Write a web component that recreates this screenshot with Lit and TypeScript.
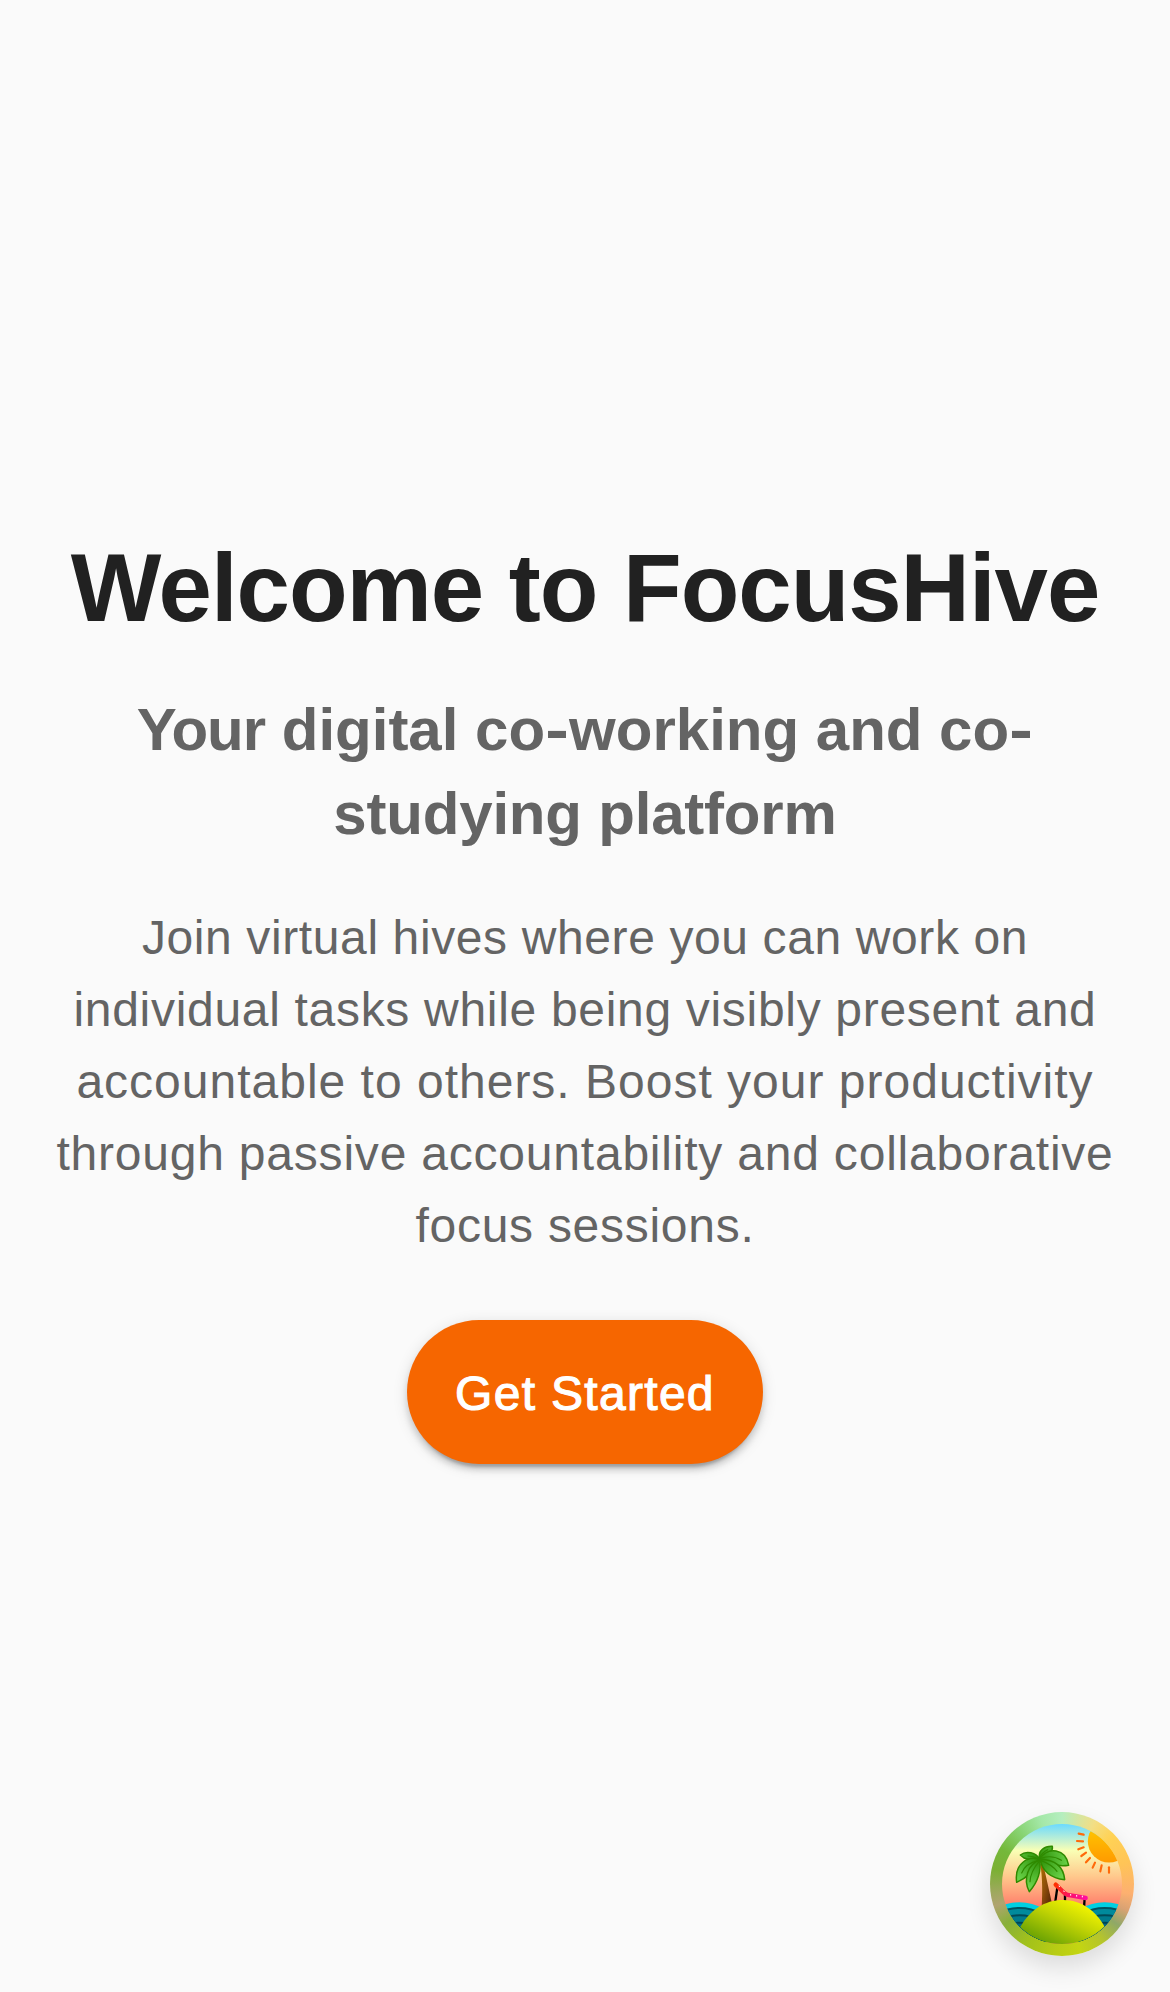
import { LitElement, html, css, svg } from "lit";
import { customElement } from "lit/decorators.js";

@customElement("island-badge")
class IslandBadge extends LitElement {
  static styles = css`
    :host {
      display: block;
    }
    .ring {
      box-sizing: border-box;
      display: block;
      width: 144px;
      height: 144px;
      padding: 12px;
      border: 0;
      border-radius: 50%;
      cursor: pointer;
      background: conic-gradient(
        #b5eebf 0deg,
        #f3de84 28deg,
        #ffd255 46deg,
        #ffc457 72deg,
        #fdb070 98deg,
        #d9a273 112deg,
        #8fa868 126deg,
        #b5c42c 144deg,
        #c3d512 165deg,
        #b8cc14 185deg,
        #a3c21a 210deg,
        #88b03a 235deg,
        #b0a470 252deg,
        #a0a860 262deg,
        #7bb034 282deg,
        #74b83a 300deg,
        #88d474 322deg,
        #a4e8a8 342deg,
        #b5eebf 360deg
      );
      box-shadow: 0 12px 24px rgba(0, 0, 0, 0.12);
    }
    .art {
      display: block;
      width: 120px;
      height: 120px;
    }
  `;

  private rays = [
    [326, 130, 341, 133],
    [321, 152, 339, 153],
    [325, 177, 341, 171],
    [334, 197, 348, 187],
    [348, 216, 360, 203],
    [368, 232, 375, 217],
    [391, 243, 395, 225],
    [417, 247, 417, 231],
  ];

  private wave(cx: number, flip: number) {
    return svg`
      <g transform="translate(${cx} 0) scale(${flip} 1)">
        <ellipse cx="0" cy="399" rx="100" ry="63" fill="#00cfe2"/>
        <ellipse cx="0" cy="409" rx="94" ry="59" fill="#005362"/>
        <ellipse cx="0" cy="414" rx="92" ry="58" fill="#008a9c"/>
        <ellipse cx="0" cy="430" rx="88" ry="58" fill="#004a58"/>
        <ellipse cx="0" cy="436" rx="86" ry="58" fill="#007a8c"/>
        <ellipse cx="0" cy="452" rx="82" ry="58" fill="#004654"/>
        <ellipse cx="0" cy="458" rx="80" ry="58" fill="#006a80"/>
        <ellipse cx="0" cy="474" rx="76" ry="58" fill="#00465a"/>
        <ellipse cx="0" cy="480" rx="74" ry="58" fill="#005d78"/>
      </g>`;
  }

  render() {
    return html`
      <button class="ring" aria-label="Open devtools">
        <svg class="art" viewBox="96 101 360 360" aria-hidden="true">
          <defs>
            <clipPath id="disc"><circle cx="276" cy="281" r="180" /></clipPath>
            <linearGradient id="sky" x1="0" y1="0" x2="0" y2="1">
              <stop offset="0" stop-color="#6bdaff" />
              <stop offset="0.22" stop-color="#f9ffb5" />
              <stop offset="0.44" stop-color="#ffc88c" />
              <stop offset="0.68" stop-color="#ff7f6b" />
            </linearGradient>
            <linearGradient id="sun" x1="0" y1="0" x2="0" y2="1">
              <stop offset="0" stop-color="#ffcf00" />
              <stop offset="1" stop-color="#ff9a00" />
            </linearGradient>
            <linearGradient id="hill" x1="0.85" y1="0.15" x2="0.15" y2="0.95">
              <stop offset="0" stop-color="#f6f700" />
              <stop offset="0.4" stop-color="#c2d404" />
              <stop offset="1" stop-color="#5f9c04" />
            </linearGradient>
            <linearGradient id="trunk" x1="0" y1="0" x2="1" y2="1">
              <stop offset="0" stop-color="#b07000" />
              <stop offset="0.5" stop-color="#8a4a0a" />
              <stop offset="1" stop-color="#4a1d08" />
            </linearGradient>
            <radialGradient id="leaf" gradientUnits="userSpaceOnUse" cx="209" cy="206" r="95">
              <stop offset="0" stop-color="#2f8a00" />
              <stop offset="0.3" stop-color="#3fa41c" />
              <stop offset="1" stop-color="#70d94f" />
            </radialGradient>
            <linearGradient id="seat" gradientUnits="userSpaceOnUse" x1="255" y1="285" x2="348" y2="322">
              <stop offset="0" stop-color="#ff3000" />
              <stop offset="0.55" stop-color="#fb0f6e" />
              <stop offset="1" stop-color="#ff0fa0" />
            </linearGradient>
          </defs>
          <g clip-path="url(#disc)">
            <rect x="96" y="101" width="360" height="360" fill="url(#sky)" />
            <circle cx="417" cy="153" r="63.5" fill="url(#sun)" />
            <g stroke="#ff6a0a" stroke-width="6.5" stroke-linecap="round">
              ${this.rays.map(
                ([x1, y1, x2, y2]) =>
                  svg`<line x1=${x1} y1=${y1} x2=${x2} y2=${y2}></line>`
              )}
            </g>
            ${this.wave(148, 1)} ${this.wave(404, -1)}
            <path
              d="M211 222 C217 262 218 302 215 350 L248 350 C239 306 229 262 219 220 Z"
              fill="url(#trunk)"
            />
            <g
              fill="url(#leaf)"
              stroke="#2f8a00"
              stroke-width="4.5"
              stroke-linejoin="round"
            >
              <path d="M209 207 C199 186 168 180 151 194 L162 203 C178 210 194 209 209 207 Z" />
              <path d="M209 204 C203 180 224 167 247 168 C250 184 232 196 209 204 Z" />
              <path d="M209 205 C234 168 287 174 296 225 C268 230 238 222 209 205 Z" />
              <path d="M208 207 C176 196 132 218 140 276 C172 262 194 240 208 207 Z" />
              <path d="M209 208 C176 222 157 264 178 304 C200 279 215 247 209 208 Z" />
              <path d="M210 207 C250 208 280 226 284 268 C244 264 218 244 210 207 Z" />
            </g>
            <g fill="none" stroke="#2f8a00" stroke-width="3.5" stroke-linecap="round">
              <path d="M205 211 C177 217 162 230 155 248" />
              <path d="M207 214 C190 234 181 252 180 274" />
              <path d="M214 211 C235 219 250 229 261 243" />
              <path d="M216 203 C238 196 258 200 274 210" />
              <path d="M209 202 C214 190 222 183 233 178" />
              <path d="M203 205 C194 199 184 197 174 197" />
            </g>
            <g stroke="#000" stroke-width="7" fill="none">
              <path d="M262 292 L255 340" />
              <path d="M285 314 V340" />
              <path d="M344 324 L342 352" />
            </g>
            <path
              d="M257 283 L283 308 Q290 315 302 315 L347 323"
              fill="none"
              stroke="url(#seat)"
              stroke-width="13"
              stroke-linecap="round"
              stroke-linejoin="round"
            />
            <path
              d="M267 286 L269 290 M281 301 L283 305 M302 311 V316 M320 314 V319 M337 316 V321"
              stroke="#fff"
              stroke-width="3"
            />
            <path
              d="M152 408 C180 360 222 329 280 329 C334 329 378 362 403 408 L403 461 H152 Z"
              fill="url(#hill)"
            />
          </g>
        </svg>
      </button>
    `;
  }
}

@customElement("app-root")
class AppRoot extends LitElement {
  static styles = css`
    :host {
      display: block;
      font-family: "Liberation Sans", Arial, Helvetica, sans-serif;
    }
    .page {
      position: relative;
      box-sizing: border-box;
      height: 1992px;
      padding: 2px 48px 0;
      background: #fafafa;
      display: flex;
      flex-direction: column;
      align-items: center;
      justify-content: center;
      text-align: center;
    }
    .title {
      margin: 0 0 42px;
      font-size: 96px;
      line-height: 116px;
      font-weight: 700;
      letter-spacing: -1.03px;
      color: #212121;
      white-space: nowrap;
    }
    .tagline {
      margin: 0 0 46px;
      font-size: 60px;
      line-height: 84px;
      font-weight: 700;
      color: #646464;
    }
    .tight {
      letter-spacing: -1px;
    }
    .hyphen {
      display: inline-block;
      padding: 0 2px;
      transform: scaleX(1.18);
    }
    .snug {
      letter-spacing: -0.2px;
    }
    .copy {
      margin: 0 0 58px;
      font-size: 48px;
      line-height: 72px;
      color: #646464;
      white-space: nowrap;
    }
    .l1 {
      letter-spacing: 0.61px;
    }
    .l2 {
      letter-spacing: 0.69px;
    }
    .l3 {
      letter-spacing: 1px;
    }
    .l4 {
      letter-spacing: 0.79px;
    }
    .l5 {
      letter-spacing: 0.72px;
    }
    .cta {
      box-sizing: border-box;
      width: 356px;
      height: 144px;
      padding: 2px 0 0;
      border: 0;
      border-radius: 72px;
      background: #f66600;
      color: #fff;
      font: inherit;
      font-size: 48px;
      letter-spacing: 1.3px;
      -webkit-text-stroke: 1.1px #fff;
      box-shadow: 0 9px 3px -6px rgba(0, 0, 0, 0.2),
        0 6px 6px 0 rgba(0, 0, 0, 0.14), 0 3px 15px 0 rgba(0, 0, 0, 0.12);
      cursor: pointer;
    }
    .floating {
      position: absolute;
      right: 36px;
      bottom: 36px;
    }
  `;

  render() {
    return html`
      <main class="page">
        <h1 class="title">Welcome to FocusHive</h1>
        <h2 class="tagline">
          <span class="tight">Your</span> digital
          co<span class="hyphen">-</span>working and
          co<span class="hyphen">-</span><br /><span class="snug"
            >studying platform</span
          >
        </h2>
        <p class="copy">
          <span class="l1">Join virtual hives where you can work on</span><br />
          <span class="l2">individual tasks while being visibly present and</span
          ><br />
          <span class="l3">accountable to others. Boost your productivity</span
          ><br />
          <span class="l4">through passive accountability and collaborative</span
          ><br />
          <span class="l5">focus sessions.</span>
        </p>
        <button class="cta">Get Started</button>
        <island-badge class="floating"></island-badge>
      </main>
    `;
  }
}
